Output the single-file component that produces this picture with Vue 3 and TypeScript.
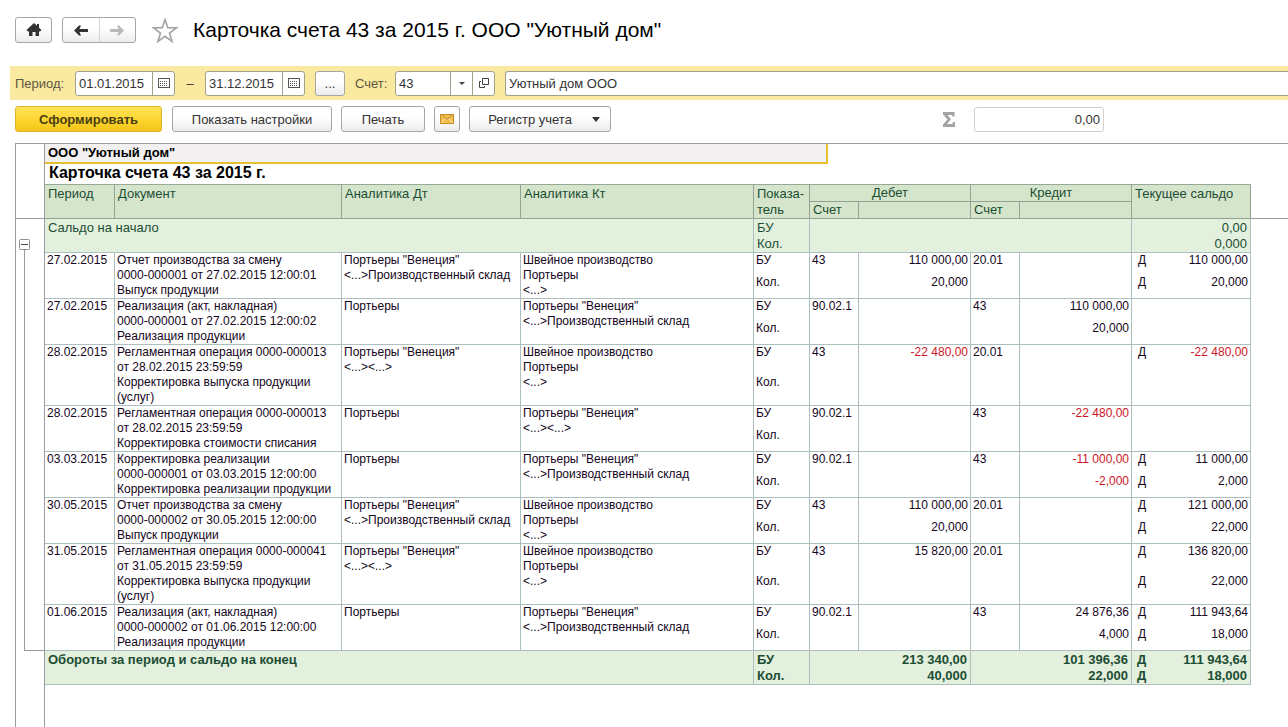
<script setup lang="ts">
import { ref } from 'vue'

interface Side {
  account: string
  sum: string
  qty: string
}

interface Entry {
  date: string
  doc: string[]
  dt: string[]
  kt: string[]
  debit: Side
  credit: Side
  balance: string
  balanceQty: string
}

const dateFrom = ref('01.01.2015')
const dateTo = ref('31.12.2015')
const account = ref('43')
const organization = ref('Уютный дом ООО')
const total = ref('0,00')
const expanded = ref(true)

const side = (acc: string, sum = '', qty = ''): Side => ({ account: acc, sum, qty })

const stock = '<...>Производственный склад'
const venice = 'Портьеры "Венеция"'
const sewing = ['Швейное производство', 'Портьеры', '<...>']

const entries: Entry[] = [
  {
    date: '27.02.2015',
    doc: ['Отчет производства за смену', '0000-000001 от 27.02.2015 12:00:01', 'Выпуск продукции'],
    dt: [venice, stock],
    kt: sewing,
    debit: side('43', '110 000,00', '20,000'),
    credit: side('20.01'),
    balance: '110 000,00',
    balanceQty: '20,000',
  },
  {
    date: '27.02.2015',
    doc: ['Реализация (акт, накладная)', '0000-000001 от 27.02.2015 12:00:02', 'Реализация продукции'],
    dt: ['Портьеры'],
    kt: [venice, stock],
    debit: side('90.02.1'),
    credit: side('43', '110 000,00', '20,000'),
    balance: '',
    balanceQty: '',
  },
  {
    date: '28.02.2015',
    doc: ['Регламентная операция 0000-000013', 'от 28.02.2015 23:59:59', 'Корректировка выпуска продукции', '(услуг)'],
    dt: [venice, '<...><...>'],
    kt: sewing,
    debit: side('43', '-22 480,00'),
    credit: side('20.01'),
    balance: '-22 480,00',
    balanceQty: '',
  },
  {
    date: '28.02.2015',
    doc: ['Регламентная операция 0000-000013', 'от 28.02.2015 23:59:59', 'Корректировка стоимости списания'],
    dt: ['Портьеры'],
    kt: [venice, '<...><...>'],
    debit: side('90.02.1'),
    credit: side('43', '-22 480,00'),
    balance: '',
    balanceQty: '',
  },
  {
    date: '03.03.2015',
    doc: ['Корректировка реализации', '0000-000001 от 03.03.2015 12:00:00', 'Корректировка реализации продукции'],
    dt: ['Портьеры'],
    kt: [venice, stock],
    debit: side('90.02.1'),
    credit: side('43', '-11 000,00', '-2,000'),
    balance: '11 000,00',
    balanceQty: '2,000',
  },
  {
    date: '30.05.2015',
    doc: ['Отчет производства за смену', '0000-000002 от 30.05.2015 12:00:00', 'Выпуск продукции'],
    dt: [venice, stock],
    kt: sewing,
    debit: side('43', '110 000,00', '20,000'),
    credit: side('20.01'),
    balance: '121 000,00',
    balanceQty: '22,000',
  },
  {
    date: '31.05.2015',
    doc: ['Регламентная операция 0000-000041', 'от 31.05.2015 23:59:59', 'Корректировка выпуска продукции', '(услуг)'],
    dt: [venice, '<...><...>'],
    kt: sewing,
    debit: side('43', '15 820,00'),
    credit: side('20.01'),
    balance: '136 820,00',
    balanceQty: '22,000',
  },
  {
    date: '01.06.2015',
    doc: ['Реализация (акт, накладная)', '0000-000002 от 01.06.2015 12:00:00', 'Реализация продукции'],
    dt: ['Портьеры'],
    kt: [venice, stock],
    debit: side('90.02.1'),
    credit: side('43', '24 876,36', '4,000'),
    balance: '111 943,64',
    balanceQty: '18,000',
  },
]

const isNegative = (value: string) => value.startsWith('-')
</script>

<template>
  <div class="page">
    <header class="top">
      <button class="btn home" type="button" aria-label="Начальная страница">
        <svg width="16" height="14" viewBox="0 0 16 14"><path d="M8 0 .5 7 2 8.500h1V13h3.500V9h3v4H13V8.500h1L15.500 7 13 4.700V1h-2v1.800z" fill="#333" /></svg>
      </button>
      <div class="nav">
        <button type="button" aria-label="Назад">
          <svg width="14" height="11" viewBox="0 0 14 11"><path d="M0 5.500 5 .5h2L5.500 4H14v3H5.500L7 10.500H5z" fill="#333" /></svg>
        </button>
        <button type="button" aria-label="Вперед">
          <svg width="14" height="11" viewBox="0 0 14 11"><path d="M14 5.500 9 .5H7L8.500 4H0v3h8.500L7 10.500h2z" fill="#b9b9b9" /></svg>
        </button>
      </div>
      <button class="star" type="button" aria-label="Добавить в избранное">
        <svg width="26" height="25" viewBox="0 0 26 25"><path d="M13 1.500l2.800 8.300 8.700.1-7 5.100 2.600 8.500L13 18.300l-7.100 5.200L8.500 15l-7-5.100 8.700-.1z" fill="#fff" stroke="#a3a3a3" stroke-width="1.600" /></svg>
      </button>
      <h1>Карточка счета 43 за 2015 г. ООО "Уютный дом"</h1>
    </header>

    <form class="filter" @submit.prevent>
      <label class="caption period" for="date-from">Период:</label>
      <div class="field date">
        <input id="date-from" v-model="dateFrom" type="text" />
        <button type="button" aria-label="Выбрать начало периода">
          <svg width="12" height="10" viewBox="0 0 12 10"><rect x=".5" y=".5" width="11" height="9" fill="#fff" stroke="#555" /><path d="M2 3.500h8M2 5.500h8M2 7.500h8" stroke="#555" stroke-dasharray="1 1" /></svg>
        </button>
      </div>
      <label class="dash" for="date-to">–</label>
      <div class="field date">
        <input id="date-to" v-model="dateTo" type="text" />
        <button type="button" aria-label="Выбрать конец периода">
          <svg width="12" height="10" viewBox="0 0 12 10"><rect x=".5" y=".5" width="11" height="9" fill="#fff" stroke="#555" /><path d="M2 3.500h8M2 5.500h8M2 7.500h8" stroke="#555" stroke-dasharray="1 1" /></svg>
        </button>
      </div>
      <button class="btn more" type="button">...</button>
      <label class="caption account" for="account">Счет:</label>
      <div class="field acc">
        <input id="account" v-model="account" type="text" />
        <button type="button" aria-label="Выбрать счет из списка">
          <svg width="6" height="3" viewBox="0 0 6 3"><path d="M0 0h6L3 3z" fill="#444" /></svg>
        </button>
        <button type="button" aria-label="Открыть счет">
          <svg width="10" height="10" viewBox="0 0 10 10"><path d="M3.500.5h6v6h-6zM2 3.500H.5v6h5V8" fill="none" stroke="#444" /></svg>
        </button>
      </div>
      <div class="field org">
        <input v-model="organization" type="text" aria-label="Организация" />
      </div>
    </form>

    <div class="tools">
      <button class="btn primary" type="button">Сформировать</button>
      <button class="btn settings" type="button">Показать настройки</button>
      <button class="btn print" type="button">Печать</button>
      <button class="btn mail" type="button" aria-label="Отправить по почте">
        <svg width="14" height="10" viewBox="0 0 14 10"><rect x=".5" y=".5" width="13" height="9" fill="#f3bd4d" stroke="#c98d24" /><path d="M1 1l6 5 6-5M1 9l4-4M13 9L9 5" fill="none" stroke="#fbe7b4" /><path d="M1 .5l6 5 6-5" fill="none" stroke="#b97c1c" /></svg>
      </button>
      <button class="btn register" type="button">
        <span>Регистр учета</span>
        <svg width="8" height="5" viewBox="0 0 8 5"><path d="M0 0h8L4 5z" fill="#333" /></svg>
      </button>
      <label class="sigma" for="total" aria-label="Сумма">
        <svg width="12" height="15" viewBox="0 0 12 15"><path d="M0 0h11.500v4.500h-2L9 3H4.500L8 7.200 4 12h5.500l.5-2h2v5H0v-2.500l4.500-5L0 2.500z" fill="#a3a3a3" /></svg>
      </label>
      <input id="total" v-model="total" class="total" type="text" />
    </div>

    <main class="sheet">
      <div class="grid">
        <table>
          <colgroup>
            <col class="c-gutter" />
            <col class="c-date" />
            <col class="c-doc" />
            <col class="c-dt" />
            <col class="c-kt" />
            <col class="c-ind" />
            <col class="c-acc" />
            <col class="c-sum" />
            <col class="c-acc" />
            <col class="c-sum" />
            <col class="c-mark" />
            <col class="c-bal" />
            <col />
          </colgroup>
          <thead>
            <tr>
              <td class="gutter"></td>
              <td colspan="12" class="title"><div class="selected">ООО "Уютный дом"</div></td>
            </tr>
            <tr>
              <td class="gutter"></td>
              <td colspan="11" class="title heading">Карточка счета 43 за 2015 г.</td>
              <td></td>
            </tr>
            <tr class="head">
              <td class="gutter ruled" rowspan="2"></td>
              <th class="tall" rowspan="2">Период</th>
              <th class="tall" rowspan="2">Документ</th>
              <th class="tall" rowspan="2">Аналитика Дт</th>
              <th class="tall" rowspan="2">Аналитика Кт</th>
              <th class="tall" rowspan="2">Показа-<br />тель</th>
              <th colspan="2" class="center">Дебет</th>
              <th colspan="2" class="center">Кредит</th>
              <th class="tall" colspan="2" rowspan="2">Текущее сальдо</th>
              <td class="ruled" rowspan="2"></td>
            </tr>
            <tr class="head">
              <th>Счет</th>
              <th></th>
              <th>Счет</th>
              <th></th>
            </tr>
          </thead>
          <tbody>
            <tr class="green first">
              <td class="gutter toggle-cell" rowspan="2">
                <button class="toggle" type="button" :aria-expanded="expanded" aria-label="Свернуть группу" @click="expanded = !expanded">
                  <svg width="11" height="11" viewBox="0 0 11 11"><rect x=".5" y=".5" width="10" height="10" rx="1" fill="#fff" stroke="#8f8f98" /><path d="M2 5.500h7" stroke="#444" /><path v-if="!expanded" d="M5.500 2v7" stroke="#444" /></svg>
                </button>
              </td>
              <td colspan="4" rowspan="2" class="cell">Сальдо на начало</td>
              <td class="cell open">БУ</td>
              <td colspan="4" rowspan="2" class="cell"></td>
              <td colspan="2" class="cell open num">0,00</td>
              <td></td>
            </tr>
            <tr class="green">
              <td class="cell">Кол.</td>
              <td colspan="2" class="cell num">0,000</td>
              <td></td>
            </tr>
            <template v-if="expanded">
              <template v-for="(e, i) in entries" :key="i">
                <tr class="data">
                  <td class="gutter branch" :class="{ last: i === entries.length - 1 }" rowspan="2"></td>
                  <td class="cell" rowspan="2">{{ e.date }}</td>
                  <td class="cell" rowspan="2"><div v-for="line in e.doc" :key="line">{{ line }}</div></td>
                  <td class="cell" rowspan="2"><div v-for="line in e.dt" :key="line">{{ line }}</div></td>
                  <td class="cell" rowspan="2"><div v-for="line in e.kt" :key="line">{{ line }}</div></td>
                  <td class="cell open">БУ</td>
                  <td class="cell" rowspan="2">{{ e.debit.account }}</td>
                  <td class="cell open num" :class="{ neg: isNegative(e.debit.sum) }">{{ e.debit.sum }}</td>
                  <td class="cell" rowspan="2">{{ e.credit.account }}</td>
                  <td class="cell open num" :class="{ neg: isNegative(e.credit.sum) }">{{ e.credit.sum }}</td>
                  <td class="cell open mark">{{ e.balance ? 'Д' : '' }}</td>
                  <td class="cell open num" :class="{ neg: isNegative(e.balance) }">{{ e.balance }}</td>
                  <td></td>
                </tr>
                <tr class="data">
                  <td class="cell">Кол.</td>
                  <td class="cell num" :class="{ neg: isNegative(e.debit.qty) }">{{ e.debit.qty }}</td>
                  <td class="cell num" :class="{ neg: isNegative(e.credit.qty) }">{{ e.credit.qty }}</td>
                  <td class="cell mark">{{ e.balanceQty ? 'Д' : '' }}</td>
                  <td class="cell num" :class="{ neg: isNegative(e.balanceQty) }">{{ e.balanceQty }}</td>
                  <td></td>
                </tr>
              </template>
            </template>
          </tbody>
          <tfoot>
            <tr class="green bold first">
              <td class="gutter" rowspan="2"></td>
              <td colspan="4" rowspan="2" class="cell">Обороты за период и сальдо на конец</td>
              <td class="cell open">БУ</td>
              <td colspan="2" class="cell open num">213 340,00</td>
              <td colspan="2" class="cell open num">101 396,36</td>
              <td class="cell open mark">Д</td>
              <td class="cell open num">111 943,64</td>
              <td></td>
            </tr>
            <tr class="green bold">
              <td class="cell">Кол.</td>
              <td colspan="2" class="cell num">40,000</td>
              <td colspan="2" class="cell num">22,000</td>
              <td class="cell mark">Д</td>
              <td class="cell num">18,000</td>
              <td></td>
            </tr>
          </tfoot>
        </table>
      </div>
      <div class="rest"></div>
    </main>
  </div>
</template>

<style>
body {
  margin: 0;
  background: #fff;
}
</style>

<style scoped>
.page {
  display: flex;
  flex-direction: column;
  min-height: 100vh;
  box-sizing: border-box;
  overflow: hidden;
  font-family: 'Liberation Sans', Arial, sans-serif;
  font-size: 13px;
  color: #333;
}

button,
input {
  font: inherit;
  color: inherit;
  box-sizing: border-box;
}

button {
  padding: 0;
  cursor: pointer;
}

svg {
  display: block;
  flex: none;
}

.btn {
  display: flex;
  align-items: center;
  justify-content: center;
  height: 26px;
  border: 1px solid #a6a6a6;
  border-radius: 3px;
  background: linear-gradient(#fff, #fff 40%, #ececec);
}

.top {
  display: flex;
  align-items: center;
  height: 26px;
  padding: 17px 15px 0;
}

.home {
  width: 37px;
  margin-right: 10px;
}

.nav {
  display: flex;
  width: 74px;
  height: 26px;
  box-sizing: border-box;
  border: 1px solid #a6a6a6;
  border-radius: 3px;
  background: linear-gradient(#fff, #fff 40%, #ececec);
}

.nav button {
  display: flex;
  flex: 1;
  align-items: center;
  justify-content: center;
  border: 0;
  background: none;
}

.nav button + button {
  border-left: 1px solid #d4d4d4;
}

.star {
  margin: 0 15px 0 16px;
  border: 0;
  background: none;
}

h1 {
  margin: 0;
  font-size: 21px;
  font-weight: 400;
  line-height: 26px;
  color: #000;
  white-space: nowrap;
}

.filter {
  display: flex;
  align-items: center;
  height: 34px;
  margin: 23px 0 0 10px;
  padding-left: 5px;
  background: #fae9a0;
}

.caption {
  color: #5c573f;
}

.period {
  width: 60px;
}

.field {
  display: flex;
  height: 25px;
  box-sizing: border-box;
  border: 1px solid #a39f8d;
  border-radius: 3px;
  background: #fff;
}

.field input {
  flex: 1;
  min-width: 0;
  padding: 0 3px;
  border: 0;
  background: none;
  outline: none;
}

.field button {
  display: flex;
  align-items: center;
  justify-content: center;
  width: 22px;
  border: 0;
  border-left: 1px solid #a39f8d;
  background: none;
}

.date {
  width: 100px;
}

.dash {
  width: 30px;
  text-align: center;
}

.more {
  width: 30px;
  height: 25px;
  margin: 0 10px;
}

.account {
  width: 40px;
}

.acc {
  width: 100px;
  margin-right: 10px;
}

.org {
  flex: 1;
  border-right: 0;
  border-radius: 3px 0 0 3px;
}

.tools {
  display: flex;
  align-items: center;
  padding: 6px 15px 11px;
}

.primary {
  width: 147px;
  margin-right: 10px;
  border-color: #dfb52a;
  background: linear-gradient(#ffe25a, #fbd32b 60%, #f3c51b);
  font-weight: 700;
  color: #4a4012;
}

.settings {
  width: 160px;
  margin-right: 9px;
}

.print {
  width: 84px;
  margin-right: 9px;
}

.mail {
  width: 26px;
  margin-right: 9px;
}

.register {
  width: 142px;
  gap: 20px;
  padding-left: 8px;
}

.sigma {
  margin-left: 332px;
  margin-right: 19px;
}

.total {
  width: 130px;
  height: 25px;
  padding: 0 3px;
  border: 1px solid #cfcfcf;
  border-radius: 3px;
  outline: none;
  text-align: right;
}

.sheet {
  display: flex;
  flex: 1;
  flex-direction: column;
  margin-left: 15px;
  border-top: 1px solid #9c9ca0;
  border-left: 1px solid #9c9ca0;
}

.grid {
  flex: none;
}

table {
  width: 100%;
  table-layout: fixed;
  border-collapse: separate;
  border-spacing: 0;
}

.c-gutter {
  width: 29px;
}

.c-date {
  width: 70px;
}

.c-doc {
  width: 227px;
}

.c-dt {
  width: 179px;
}

.c-kt {
  width: 233px;
}

.c-ind {
  width: 56px;
}

.c-acc {
  width: 49px;
}

.c-sum {
  width: 112px;
}

.c-mark {
  width: 29px;
}

.c-bal {
  width: 90px;
}

td,
th {
  padding: 0;
  font-weight: 400;
  text-align: left;
  vertical-align: top;
  white-space: nowrap;
}

.gutter {
  border-right: 1px solid #9c9ca0;
}

.title {
  color: #000;
  font-weight: 700;
}

.selected {
  max-width: 783px;
  height: 20px;
  padding-left: 3px;
  box-sizing: border-box;
  border-right: 2px solid #e6c02f;
  border-bottom: 2px solid #e6c02f;
  background: #f2f0f0;
  line-height: 18px;
}

.heading {
  height: 20px;
  padding-left: 4px;
  border-bottom: 1px solid #98a898;
  font-size: 16px;
  line-height: 17px;
}

.ruled {
  border-bottom: 1px solid #9c9ca0;
}

.head th {
  padding: 0 3px;
  border-right: 1px solid #93a293;
  border-bottom: 1px solid #93a293;
  background: #d5e5cc;
  color: #1c4d33;
  line-height: 16px;
}

.head .tall {
  padding-top: 1px;
}

.head .center {
  text-align: center;
}

.cell {
  padding: 0 2px;
  border-right: 1px solid #adbfbf;
  border-bottom: 1px solid #adbfbf;
}

.open {
  border-bottom: 0;
}

.mark {
  padding-left: 6px;
  border-right: 0;
}

.num {
  text-align: right;
}

.data {
  font-size: 12px;
  line-height: 15px;
  color: #14061c;
}

.data .neg {
  color: #cc1426;
}

.green .cell {
  padding-right: 3px;
  padding-left: 3px;
  background: #e3f0de;
  color: #1c4d33;
  line-height: 16px;
}

.green.first .cell {
  padding-top: 1px;
}

.green .mark {
  padding-left: 5px;
}

.bold td {
  font-weight: 700;
}

.toggle-cell {
  position: relative;
  background: linear-gradient(#9c9ca0, #9c9ca0) 8px 100% / 1px 10px no-repeat;
}

.toggle {
  position: absolute;
  top: 20px;
  left: 3px;
  border: 0;
  background: none;
}

.branch {
  background: linear-gradient(#9c9ca0, #9c9ca0) 8px 0 / 1px 100% no-repeat;
}

.branch.last {
  background:
    linear-gradient(#9c9ca0, #9c9ca0) 8px 0 / 1px 100% no-repeat,
    linear-gradient(#9c9ca0, #9c9ca0) 8px 100% / 20px 1px no-repeat;
}

.rest {
  flex: 1;
  width: 29px;
  box-sizing: border-box;
  border-right: 1px solid #9c9ca0;
}
</style>
